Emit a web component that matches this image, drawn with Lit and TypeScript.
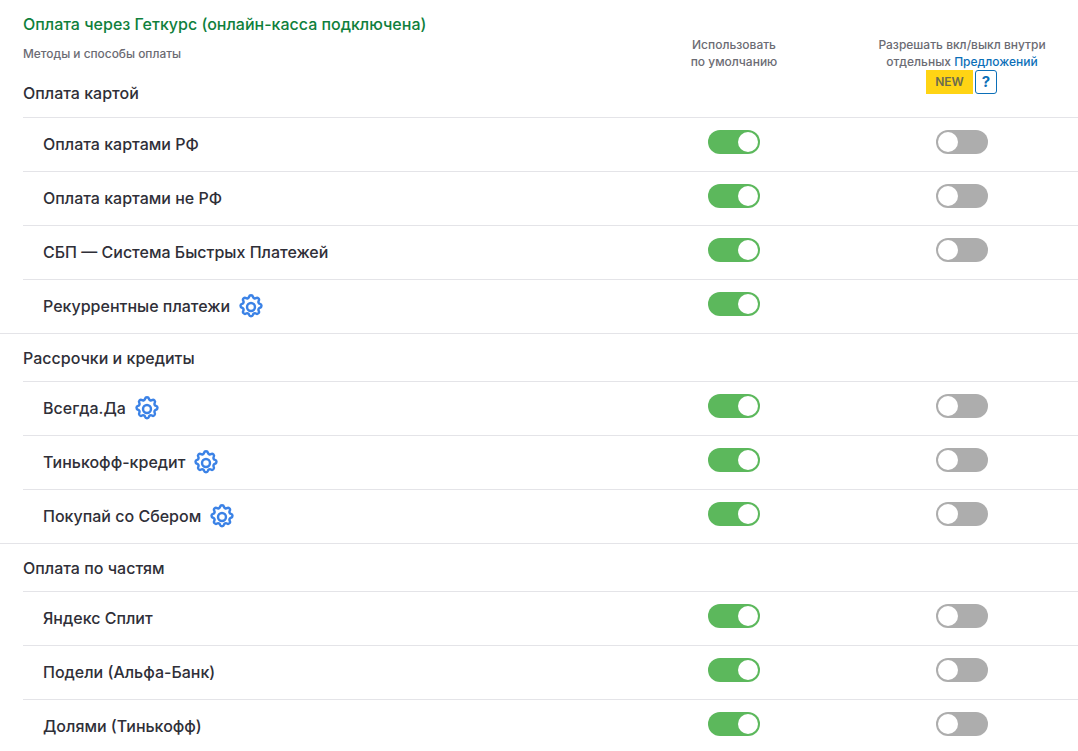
import { LitElement, html, css, svg } from "lit";
import { customElement } from "lit/decorators.js";

type Row = { name: string; gear?: boolean; second?: boolean };
type Group = { title: string; rows: Row[] };

const groups: Group[] = [
  {
    title: "Оплата картой",
    rows: [
      { name: "Оплата картами РФ", second: true },
      { name: "Оплата картами не РФ", second: true },
      { name: "СБП — Система Быстрых Платежей", second: true },
      { name: "Рекуррентные платежи", gear: true, second: false },
    ],
  },
  {
    title: "Рассрочки и кредиты",
    rows: [
      { name: "Всегда.Да", gear: true, second: true },
      { name: "Тинькофф-кредит", gear: true, second: true },
      { name: "Покупай со Сбером", gear: true, second: true },
    ],
  },
  {
    title: "Оплата по частям",
    rows: [
      { name: "Яндекс Сплит", second: true },
      { name: "Подели (Альфа-Банк)", second: true },
      { name: "Долями (Тинькофф)", second: true },
    ],
  },
];

const gear = svg`<svg class="gear" viewBox="0 0 24 24" width="28" height="28" fill="none" stroke="#3b82e6" stroke-width="2.1" stroke-linecap="round" stroke-linejoin="round"><path d="M10.33 3.32c.43-1.76 2.92-1.76 3.35 0a1.72 1.72 0 0 0 2.57 1.06c1.54-.94 3.3.83 2.37 2.37a1.72 1.72 0 0 0 1.06 2.57c1.76.43 1.76 2.92 0 3.35a1.72 1.72 0 0 0-1.06 2.57c.94 1.54-.83 3.3-2.37 2.37a1.72 1.72 0 0 0-2.57 1.06c-.43 1.76-2.92 1.76-3.35 0a1.72 1.72 0 0 0-2.57-1.06c-1.54.94-3.3-.83-2.37-2.37a1.72 1.72 0 0 0-1.06-2.57c-1.76-.43-1.76-2.92 0-3.35a1.72 1.72 0 0 0 1.06-2.57c-.94-1.54.83-3.3 2.37-2.37a1.72 1.72 0 0 0 2.57-1.06z"/><circle cx="12" cy="12" r="3.4"/></svg>`;

@customElement("app-root")
export class AppRoot extends LitElement {
  static styles = css`
    :host {
      display: block;
      width: 1078px;
      height: 751px;
      overflow: hidden;
      background: #fff;
      font-family: Inter, "Noto Sans", sans-serif;
      color: #2f2f38;
    }
    .head {
      display: grid;
      grid-template-columns: 599px 224px 232px;
      height: 117px;
      margin-left: 23px;
    }
    .head-left {
      display: flex;
      flex-direction: column;
    }
    .title {
      font-size: 16px;
      font-weight: 500;
      line-height: 20px;
      margin-top: 14px;
      color: #0f7f3c;
    }
    .sub {
      font-size: 11.9px;
      font-weight: 500;
      line-height: 14px;
      margin-top: 13px;
      color: #6b6b73;
    }
    .cat {
      font-size: 16px;
      font-weight: 500;
      line-height: 20px;
      color: #2f2f38;
    }
    .head-left .cat {
      margin-top: 22px;
    }
    .col {
      font-size: 12px;
      font-weight: 500;
      line-height: 17px;
      color: #6b6b73;
      text-align: center;
      padding-top: 36px;
    }
    .col a {
      color: #0b6fb8;
      text-decoration: none;
    }
    .tags {
      display: flex;
      justify-content: center;
      align-items: flex-start;
      gap: 2px;
      padding-right: 1px;
    }
    .new {
      background: #ffd414;
      width: 47px;
      height: 24px;
      line-height: 24px;
      font-size: 12px;
      font-weight: 600;
      color: #6b6b50;
    }
    .q {
      width: 22px;
      height: 24px;
      box-sizing: border-box;
      border: 1px solid #0b6fb8;
      border-radius: 3px;
      color: #0b6fb8;
      font-size: 15px;
      font-weight: 700;
      line-height: 22px;
    }
    .cat-row {
      height: 48px;
      box-sizing: border-box;
      border-top: 1px solid #e4e4e8;
      padding-left: 23px;
      display: flex;
      align-items: center;
    }
    .row {
      display: grid;
      grid-template-columns: 599px 224px 232px;
      height: 54px;
      box-sizing: border-box;
      border-top: 1px solid #e4e4e8;
      margin-left: 23px;
      align-items: center;
    }
    .name {
      padding-left: 20px;
      font-size: 16px;
      font-weight: 500;
      display: flex;
      align-items: center;
      gap: 7px;
    }
    .name span {
      margin-bottom: 2px;
    }
    .gear {
      flex: none;
    }
    .cell {
      display: flex;
      justify-content: center;
      margin-top: -5px;
    }
    .toggle {
      width: 52px;
      height: 24px;
      border-radius: 12px;
      box-sizing: border-box;
      padding: 2px;
      display: flex;
    }
    .toggle.on {
      background: #5cb85c;
      justify-content: flex-end;
    }
    .toggle.off {
      background: #adadad;
      justify-content: flex-start;
    }
    .knob {
      width: 20px;
      height: 20px;
      border-radius: 50%;
      background: #fff;
    }
  `;

  render() {
    return html`
      <div class="head">
        <div class="head-left">
          <div class="title">Оплата через Геткурс (онлайн-касса подключена)</div>
          <div class="sub">Методы и способы оплаты</div>
          <div class="cat">Оплата картой</div>
        </div>
        <div class="col">Использовать<br />по умолчанию</div>
        <div class="col">
          Разрешать вкл/выкл внутри<br />отдельных <a>Предложений</a>
          <div class="tags"><span class="new">NEW</span><span class="q">?</span></div>
        </div>
      </div>
      ${groups.map(
        (g, i) => html`
          ${i > 0 ? html`<div class="cat-row"><span class="cat">${g.title}</span></div>` : ""}
          ${g.rows.map(
            (r) => html`
              <div class="row">
                <div class="name"><span>${r.name}</span>${r.gear ? gear : ""}</div>
                <div class="cell"><div class="toggle on"><div class="knob"></div></div></div>
                <div class="cell">
                  ${r.second ? html`<div class="toggle off"><div class="knob"></div></div>` : ""}
                </div>
              </div>
            `
          )}
        `
      )}
    `;
  }
}
